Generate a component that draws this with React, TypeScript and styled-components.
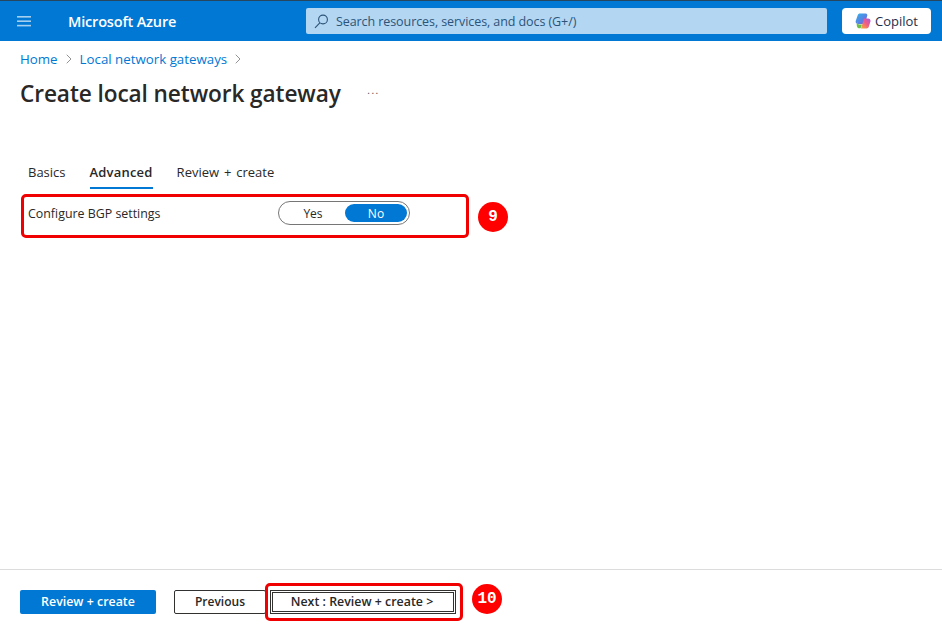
import styled, { createGlobalStyle } from "styled-components";
import { ChevronRight } from "lucide-react";

const GlobalStyle = createGlobalStyle`
  html, body { margin: 0; padding: 0; background: #fff; }
  * { box-sizing: border-box; }
`;

const Page = styled.div`
  position: relative;
  width: 942px;
  height: 628px;
  display: flex;
  flex-direction: column;
  overflow: hidden;
  font-family: "Open Sans", "Noto Sans", sans-serif;
  color: #292827;
`;

const TopBar = styled.header`
  height: 41px;
  flex: none;
  background: #0078d4;
  border-top: 1px solid #26465f;
  display: flex;
  align-items: center;
  padding: 0 11px 0 17px;
  color: #fff;
`;

const BrandName = styled.span`
  margin-left: 37px;
  width: 238px;
  font-size: 14.5px;
  font-weight: 600;
  letter-spacing: -0.17px;
`;

const SearchBox = styled.div`
  width: 521px;
  height: 26px;
  border-radius: 2px;
  background: #b3d6f2;
  color: #2c5478;
  display: flex;
  align-items: center;
  gap: 8px;
  padding-left: 8px;
  font-size: 12.5px;
  letter-spacing: -0.08px;
`;

const CopilotButton = styled.button`
  margin-left: 15px;
  width: 89px;
  height: 26px;
  border: none;
  border-radius: 4px;
  background: #fff;
  color: #242e4c;
  font: 500 13px "Open Sans", sans-serif;
  display: flex;
  align-items: center;
  justify-content: center;
  gap: 4px;
  padding: 0;
`;

const Content = styled.main`
  flex: 1;
  padding: 0 20px;
`;

const Breadcrumb = styled.nav`
  margin-top: 9px;
  height: 17px;
  display: flex;
  align-items: center;
  gap: 3px;
  font-size: 13.3px;
  color: #0078d4;
  svg { color: #777; }
`;

const TitleRow = styled.div`
  margin-top: 10px;
  height: 32px;
  display: flex;
  align-items: center;
  gap: 26px;
`;

const Title = styled.h1`
  margin: 0;
  font-size: 22.65px;
  font-weight: 600;
  letter-spacing: -0.1px;
  color: #292827;
`;

const More = styled.span`
  font-size: 15px;
  font-weight: 300;
  letter-spacing: 0.6px;
  color: #555;
  margin-bottom: 10px;
`;

const Tabs = styled.div`
  margin-top: 54px;
  display: flex;
  gap: 24px;
  padding-left: 8px;
`;

const Tab = styled.div<{ $active?: boolean }>`
  height: 26px;
  font-size: 13px;
  line-height: 18px;
  letter-spacing: ${({ $active }) => ($active ? "0.2px" : "0")};
  word-spacing: 1.5px;
  font-weight: ${({ $active }) => ($active ? 600 : 400)};
  color: #292827;
  border-bottom: 2px solid ${({ $active }) => ($active ? "#0078d4" : "transparent")};
`;

const SettingRow = styled.div`
  margin-top: 12px;
  padding-left: 8px;
  height: 24px;
  display: flex;
  align-items: center;
`;

const SettingLabel = styled.span`
  width: 250px;
  font-size: 12.4px;
  color: #292827;
`;

const Toggle = styled.div`
  width: 132px;
  height: 24px;
  padding: 2px;
  border: 1px solid #767676;
  border-radius: 12px;
  display: flex;
`;

const ToggleOption = styled.div<{ $on?: boolean }>`
  flex: ${({ $on }) => ($on ? "0 0 62px" : "1")};
  border-radius: 10px;
  display: flex;
  align-items: center;
  justify-content: center;
  font-size: 12px;
  color: ${({ $on }) => ($on ? "#fff" : "#292827")};
  background: ${({ $on }) => ($on ? "#0078d4" : "transparent")};
`;

const Footer = styled.footer`
  height: 59px;
  flex: none;
  border-top: 1px solid #dcdcdc;
  padding: 20px 0 0 20px;
  display: flex;
  align-items: flex-start;
`;

const PrimaryButton = styled.button`
  width: 136px;
  height: 24px;
  border: none;
  border-radius: 2px;
  background: #0078d4;
  color: #fff;
  font: 600 12.4px "Open Sans", sans-serif;
  padding: 0 0 2px;
`;

const SecondaryButton = styled.button`
  margin-left: 18px;
  width: 92px;
  height: 24px;
  border: 1px solid #323130;
  border-radius: 2px;
  background: #fff;
  color: #292827;
  font: 600 12px "Open Sans", sans-serif;
  padding: 0 0 2px;
`;

const FocusedButton = styled(SecondaryButton)`
  margin-left: 4px;
  width: 186px;
  border: 3px double #323130;
  border-radius: 0;
  font-size: 12.4px;
  padding-right: 2px;
`;

const Callout = styled.div<{ $x: number; $y: number; $w: number; $h: number }>`
  position: absolute;
  left: ${({ $x }) => $x}px;
  top: ${({ $y }) => $y}px;
  width: ${({ $w }) => $w}px;
  height: ${({ $h }) => $h}px;
  border: 3px solid #f00000;
  border-radius: 5px;
  pointer-events: none;
`;

const Badge = styled.div<{ $x: number; $y: number }>`
  position: absolute;
  left: ${({ $x }) => $x}px;
  top: ${({ $y }) => $y}px;
  width: 30px;
  height: 30px;
  border-radius: 50%;
  background: #ff0000;
  color: #fff;
  display: flex;
  align-items: center;
  justify-content: center;
  font: 700 16px "Liberation Mono", monospace;
`;

const MenuIcon = () => (
  <svg width="14" height="11" viewBox="0 0 14 11" fill="#fff" fillOpacity="0.65">
    <rect y="0" width="14" height="1.6" />
    <rect y="4.4" width="14" height="1.6" />
    <rect y="8.8" width="14" height="1.6" />
  </svg>
);

const SearchIcon = () => (
  <svg width="14" height="15" viewBox="0 0 14 15" fill="none" stroke="currentColor" strokeWidth="1.1">
    <circle cx="9" cy="5.5" r="4.4" />
    <path d="M5.800 8.800L1 13.800" />
  </svg>
);

const CopilotIcon = () => (
  <svg width="16" height="16" viewBox="0 0 16 16">
    <defs>
      <linearGradient id="cpA" x1="0" y1="0" x2="1" y2="1">
        <stop offset="0" stopColor="#2fb4e8" />
        <stop offset="1" stopColor="#7b5be0" />
      </linearGradient>
      <linearGradient id="cpB" x1="0" y1="1" x2="1" y2="0">
        <stop offset="0" stopColor="#f7b32b" />
        <stop offset="0.55" stopColor="#f05a8a" />
        <stop offset="1" stopColor="#a45ae0" />
      </linearGradient>
    </defs>
    <path d="M5 .5h5.500c1 0 1.600.6 1.900 1.500L10 11H3C1.500 11 .3 9.600.7 8L2.700 2.200C3 1.100 3.900.5 5 .5z" fill="url(#cpA)" />
    <path d="M6 15.500h5.500c1 0 2-.7 2.300-1.700l1.700-5.500C15.800 6.800 14.500 5.500 13.100 5.500H9L6.500 14c-.2.700-.6 1.200-1.100 1.500z" fill="url(#cpB)" />
    <path d="M2.700 8C2.300 10 2.500 11.500 4.500 11.500H7l-.8 2.500C5.900 15 5 15.600 3.500 15.200 1.500 14.500 1.200 10.500 2.700 8z" fill="#6cc04a" />
  </svg>
);

const App = () => {
  return (
    <Page>
      <GlobalStyle />
      <TopBar>
        <MenuIcon />
        <BrandName>Microsoft Azure</BrandName>
        <SearchBox>
          <SearchIcon />
          Search resources, services, and docs (G+/)
        </SearchBox>
        <CopilotButton>
          <CopilotIcon />
          Copilot
        </CopilotButton>
      </TopBar>
      <Content>
        <Breadcrumb>
          <span>Home</span>
          <ChevronRight size={16} strokeWidth={1.2} />
          <span>Local network gateways</span>
          <ChevronRight size={16} strokeWidth={1.2} />
        </Breadcrumb>
        <TitleRow>
          <Title>Create local network gateway</Title>
          <More>...</More>
        </TitleRow>
        <Tabs>
          <Tab>Basics</Tab>
          <Tab $active>Advanced</Tab>
          <Tab>Review + create</Tab>
        </Tabs>
        <SettingRow>
          <SettingLabel>Configure BGP settings</SettingLabel>
          <Toggle>
            <ToggleOption>Yes</ToggleOption>
            <ToggleOption $on>No</ToggleOption>
          </Toggle>
        </SettingRow>
      </Content>
      <Footer>
        <PrimaryButton>Review + create</PrimaryButton>
        <SecondaryButton>Previous</SecondaryButton>
        <FocusedButton>Next : Review + create &gt;</FocusedButton>
      </Footer>
      <Callout $x={21} $y={194} $w={448} $h={44} />
      <Badge $x={478} $y={202}>9</Badge>
      <Callout $x={265} $y={583} $w={198} $h={38} />
      <Badge $x={472} $y={584}>10</Badge>
    </Page>
  );
};

export default App;
